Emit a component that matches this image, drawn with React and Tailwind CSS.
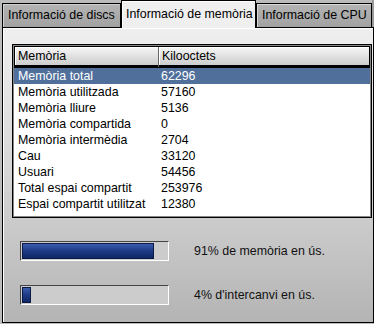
import React from 'react';

const rows = [
  ['Memòria total', '62296'],
  ['Memòria utilitzada', '57160'],
  ['Memòria lliure', '5136'],
  ['Memòria compartida', '0'],
  ['Memòria intermèdia', '2704'],
  ['Cau', '33120'],
  ['Usuari', '54456'],
  ['Total espai compartit', '253976'],
  ['Espai compartit utilitzat', '12380'],
];

const Bar = ({ pct, label }) => (
  <div className="flex items-center h-[20px]">
    <div className="w-[149px] h-[20px] border-t border-l border-t-[#444] border-l-[#444] border-b border-r border-b-white border-r-white bg-[#cccccc] p-[1px]">
      <div
        className="h-full border border-[#0b1a44] bg-linear-to-b from-[#3c5cae] via-[#1d3a86] to-[#102866]"
        style={{ width: `${pct}%` }}
      />
    </div>
    <span className="ml-[25px] text-[#111]">{label}</span>
  </div>
);

const App = () => {
  return (
    <div className="w-[374px] h-[324px] bg-[#bcbcbc] pl-[2px] overflow-hidden font-['Liberation_Sans',Arial,sans-serif] text-[12.4px] leading-none text-black">
      <div className="flex items-end h-[27px]">
        <div className="w-[119px] h-[24px] border border-b-0 border-black bg-linear-to-b from-[#b4b4b4] to-[#a2a2a2] pl-[5px] flex items-center shadow-[inset_1px_1px_0_#d0d0d0]">
          Informació de discs
        </div>
        <div className="w-[135px] h-[28px] -mb-[1px] relative z-10 border border-b-0 border-black bg-[#efefef] pl-[4px] flex items-center shadow-[inset_1px_1px_0_#ffffff]">
          Informació de memòria
        </div>
        <div className="w-[116px] h-[24px] border border-b-0 border-black bg-linear-to-b from-[#b4b4b4] to-[#a2a2a2] pl-[5px] flex items-center shadow-[inset_1px_1px_0_#d8d8d8]">
          Informació de CPU
        </div>
        <div className="flex-1 h-[27px] bg-[#9a9a9a]" />
      </div>
      <div className="w-[372px] h-[296px] border border-black bg-linear-to-b from-[#efefef] via-[#d6d6d6] to-[#b4b4b4] shadow-[inset_1px_1px_0_#ffffff] pt-[16px] pl-[9px]">
        <div className="w-[360px] h-[174px] border border-black bg-white p-[1px] shadow-[inset_0_0_0_1px_#888]">
          <div className="flex h-[22px] border border-black bg-[#666] gap-[1px]">
            <div className="w-[143px] bg-linear-to-b from-[#f6f6f6] to-[#cdcdcd] border-b-2 border-black pl-[3px] flex items-center shadow-[inset_1px_1px_0_#ffffff]">
              Memòria
            </div>
            <div className="flex-1 bg-linear-to-b from-[#f6f6f6] to-[#cdcdcd] border-b-2 border-black pl-[3px] flex items-center shadow-[inset_1px_1px_0_#ffffff]">
              Kilooctets
            </div>
          </div>
          <div className="flex flex-col">
            {rows.map(([name, val], i) => (
              <div
                key={name}
                className={`flex h-[16px] items-center ${i === 0 ? 'bg-[#50709b] text-white' : ''}`}
              >
                <span className="w-[146px] pl-[4px]">{name}</span>
                <span className="pl-[1px]">{val}</span>
              </div>
            ))}
          </div>
        </div>
        <div className="flex flex-col gap-[24px] mt-[23px] pl-[8px]">
          <Bar pct={91} label="91% de memòria en ús." />
          <Bar pct={6} label="4% d'intercanvi en ús." />
        </div>
      </div>
    </div>
  );
};

export default App;
